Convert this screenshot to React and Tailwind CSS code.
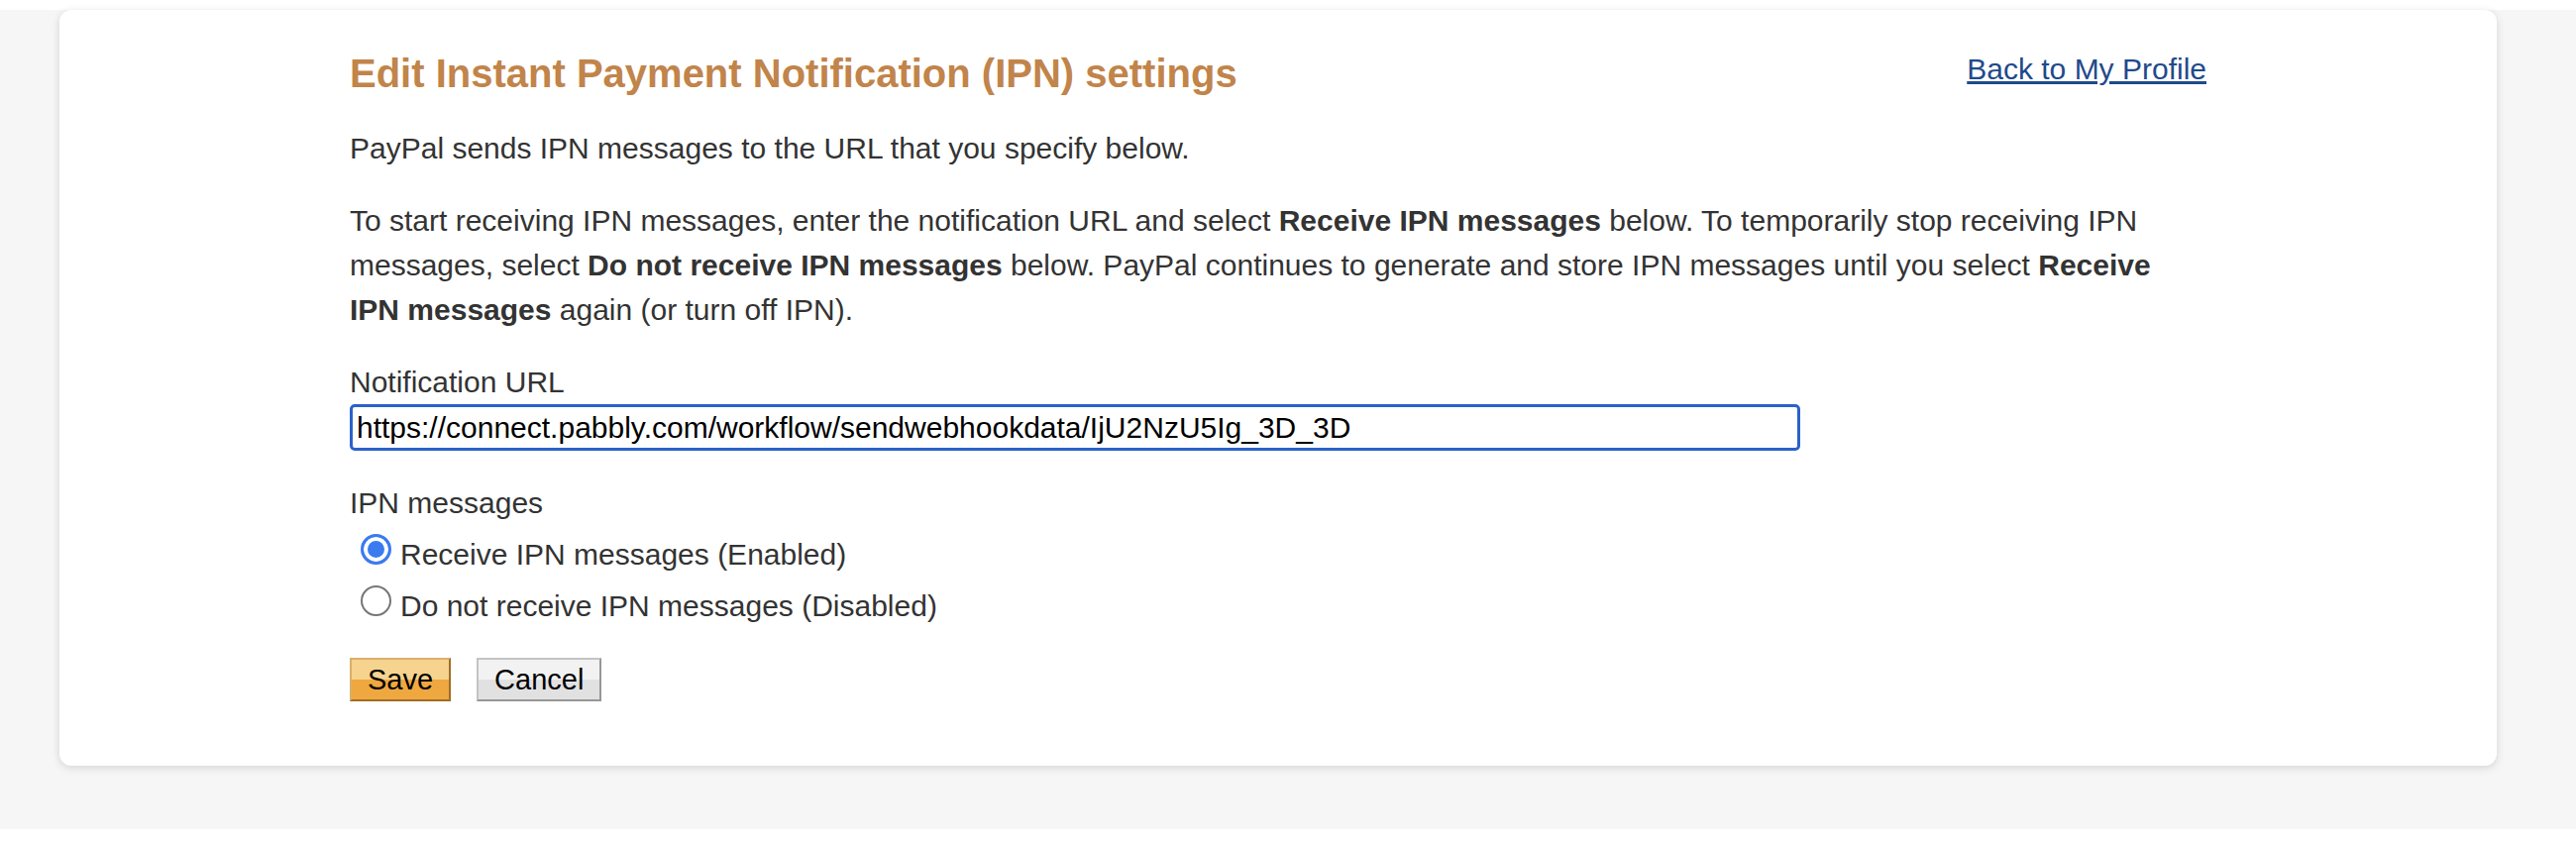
import { useState } from 'react';

function Radio({ checked, onChange, children }) {
  return (
    <label className="flex h-[45px] items-center pl-[11px]">
      <input
        type="radio"
        name="ipn"
        checked={checked}
        onChange={onChange}
        className="-mt-[10px] h-[31px] w-[31px] shrink-0 appearance-none rounded-full border-[2px] border-[#767676] bg-white checked:border-[3px] checked:border-[#3a7bf0] checked:bg-[#3a7bf0] checked:shadow-[inset_0_0_0_4px_white]"
      />
      <span className="ml-[9px]">{children}</span>
    </label>
  );
}

export default function App() {
  const [enabled, setEnabled] = useState(true);
  const [url, setUrl] = useState('https://connect.pabbly.com/workflow/sendwebhookdata/IjU2NzU5Ig_3D_3D');

  return (
    <div className="bg-white pt-[10px] pb-[15px] font-['Liberation_Sans',Arial,sans-serif] text-[30px] leading-[45px] text-[#333333]">
      <div className="bg-[#f6f6f6] pl-[60px] pr-[80px] pb-[64px]">
        <div className="rounded-[12px] bg-white pt-[40px] pb-[65px] shadow-[0_2px_8px_rgba(0,0,0,0.14)]">
          <div className="mx-auto w-[1874px]">
            <div className="flex items-start justify-between">
              <h1 className="text-[40px] font-bold leading-[48px] text-[#c1844a]">
                Edit Instant Payment Notification (IPN) settings
              </h1>
              <a href="#" className="leading-[39px] text-[#1f4a8b] underline">
                Back to My Profile
              </a>
            </div>

            <p className="mt-[29px]">PayPal sends IPN messages to the URL that you specify below.</p>

            <p className="mt-[28px]">
              To start receiving IPN messages, enter the notification URL and select <b>Receive IPN messages</b> below.
              To temporarily stop receiving IPN messages, select <b>Do not receive IPN messages</b> below. PayPal
              continues to generate and store IPN messages until you select <b>Receive IPN messages</b> again (or turn
              off IPN).
            </p>

            <div className="mt-[28px]">Notification URL</div>
            <input
              value={url}
              onChange={(e) => setUrl(e.target.value)}
              className="block h-[47px] w-[1464px] rounded-[5px] border-[3px] border-[#2a62c9] px-[4px] text-[30px] text-black outline-none"
            />

            <div className="mt-[30px]">IPN messages</div>
            <div className="mt-[7px] flex flex-col gap-[7px]">
              <Radio checked={enabled} onChange={() => setEnabled(true)}>
                Receive IPN messages (Enabled)
              </Radio>
              <Radio checked={!enabled} onChange={() => setEnabled(false)}>
                Do not receive IPN messages (Disabled)
              </Radio>
            </div>

            <div className="mt-[30px] flex gap-[26px]">
              <button className="h-[44px] border-[2px] border-t-[#d9b06a] border-l-[#d9b06a] border-r-[#a06d25] border-b-[#a06d25] bg-[linear-gradient(#f6d38e_0%,#f6d38e_50%,#efa83f_50%,#efa83f_100%)] px-[16px] text-[29px] leading-none text-black">
                Save
              </button>
              <button className="h-[44px] border-[2px] border-t-[#c4c4c4] border-l-[#c4c4c4] border-r-[#979797] border-b-[#979797] bg-[linear-gradient(#f2f2f2_0%,#f2f2f2_50%,#e1e1e1_50%,#e1e1e1_100%)] px-[16px] text-[29px] leading-none text-black">
                Cancel
              </button>
            </div>
          </div>
        </div>
      </div>
    </div>
  );
}
